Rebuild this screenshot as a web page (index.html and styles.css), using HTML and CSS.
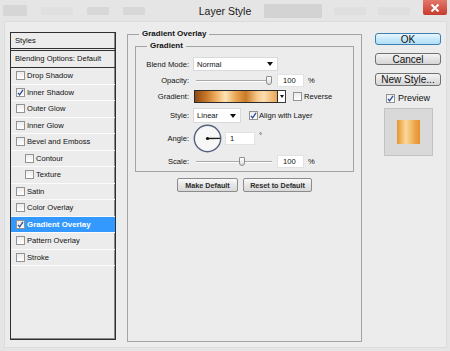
FILE: index.html
```html
<!DOCTYPE html>
<html lang="en">

<head>
    <meta charset="UTF-8">
    <meta name="viewport" content="width=device-width, initial-scale=1.0">
    <title>Layer Style</title>
    <link rel="stylesheet" href="styles.css">
</head>

<body>
    <div class="titlebar">
        <div class="tools tools-left">
            <span class="ghost g-icon"></span>
            <span class="ghost g-wide"></span>
            <span class="ghost g-small"></span>
            <span class="ghost g-small"></span>
        </div>
        <div class="title">Layer Style</div>
        <div class="tools tools-right">
            <span class="ghost g-tab"></span>
            <span class="ghost g-text"></span>
            <span class="ghost g-text"></span>
            <div class="close">
                <svg width="10" height="8" viewBox="0 0 10 8"><path d="M1.5 0.5 L8.5 7.5 M8.5 0.5 L1.5 7.5" stroke="#fff" stroke-width="2" fill="none"/></svg>
            </div>
        </div>
    </div>

    <div class="window">
        <div class="styles-panel">
            <div class="panel-head">Styles</div>
            <div class="blend-opts">Blending Options: Default</div>
            <div class="style-row"><span class="cb"></span>Drop Shadow</div>
            <div class="style-row"><span class="cb checked"><svg width="7" height="7" viewBox="0 0 7 7"><path d="M1 3.8 L2.6 5.8 L6 0.8" stroke="#2d4f9e" stroke-width="1.3" fill="none"/></svg></span>Inner Shadow</div>
            <div class="style-row"><span class="cb"></span>Outer Glow</div>
            <div class="style-row"><span class="cb"></span>Inner Glow</div>
            <div class="style-row"><span class="cb"></span>Bevel and Emboss</div>
            <div class="style-row sub"><span class="cb"></span>Contour</div>
            <div class="style-row sub"><span class="cb"></span>Texture</div>
            <div class="style-row"><span class="cb"></span>Satin</div>
            <div class="style-row"><span class="cb"></span>Color Overlay</div>
            <div class="style-row active"><span class="cb checked"><svg width="7" height="7" viewBox="0 0 7 7"><path d="M1 3.8 L2.6 5.8 L6 0.8" stroke="#2d4f9e" stroke-width="1.3" fill="none"/></svg></span>Gradient Overlay</div>
            <div class="style-row"><span class="cb"></span>Pattern Overlay</div>
            <div class="style-row"><span class="cb"></span>Stroke</div>
        </div>

        <fieldset class="group outer">
            <legend>Gradient Overlay</legend>
            <fieldset class="group inner">
                <legend>Gradient</legend>
                <div class="field f-blend">
                    <span class="lbl">Blend Mode:</span>
                    <div class="select s-blend">Normal<span class="tri"></span></div>
                </div>
                <div class="field f-opacity">
                    <span class="lbl">Opacity:</span>
                    <div class="slider"><span class="thumb" style="left:70px"></span></div>
                    <div class="num">100</div>
                    <span class="unit">%</span>
                </div>
                <div class="field f-gradient">
                    <span class="lbl">Gradient:</span>
                    <div class="swatch"></div>
                    <div class="drop"><span class="tri"></span></div>
                    <span class="cb cb-reverse"></span>
                    <span class="cb-text">Reverse</span>
                </div>
                <div class="field f-style">
                    <span class="lbl">Style:</span>
                    <div class="select s-style">Linear<span class="tri"></span></div>
                    <span class="cb checked cb-align"><svg width="7" height="7" viewBox="0 0 7 7"><path d="M1 3.8 L2.6 5.8 L6 0.8" stroke="#2d4f9e" stroke-width="1.3" fill="none"/></svg></span>
                    <span class="cb-text">Align with Layer</span>
                </div>
                <div class="field f-angle">
                    <span class="lbl">Angle:</span>
                    <svg class="dial" width="29" height="29" viewBox="0 0 29 29">
                        <circle cx="14.5" cy="14.5" r="13.2" fill="#f7f7f7" stroke="#56637f" stroke-width="1.4"/>
                        <line x1="14.5" y1="14.5" x2="27" y2="14.3" stroke="#1e1e1e" stroke-width="1.3"/>
                        <circle cx="14.5" cy="14.5" r="1.6" fill="#111"/>
                    </svg>
                    <div class="num num-angle">1</div>
                    <span class="deg">°</span>
                </div>
                <div class="field f-scale">
                    <span class="lbl">Scale:</span>
                    <div class="slider"><span class="thumb" style="left:43px"></span></div>
                    <div class="num">100</div>
                    <span class="unit">%</span>
                </div>
            </fieldset>
            <div class="defaults">
                <div class="small-btn b-make">Make Default</div>
                <div class="small-btn b-reset">Reset to Default</div>
            </div>
        </fieldset>

        <div class="side">
            <div class="btn ok">OK</div>
            <div class="btn">Cancel</div>
            <div class="btn new">New Style...</div>
            <div class="preview-check">
                <span class="cb checked"><svg width="7" height="7" viewBox="0 0 7 7"><path d="M1 3.8 L2.6 5.8 L6 0.8" stroke="#2d4f9e" stroke-width="1.3" fill="none"/></svg></span>
                <span>Preview</span>
            </div>
            <div class="preview-box">
                <div class="preview-swatch"></div>
            </div>
        </div>
    </div>
</body>

</html>
```

FILE: styles.css
```css
body {
    margin: 0;
    width: 450px;
    height: 351px;
    overflow: hidden;
    background: #e5e5e5;
    font-family: "Liberation Sans", Arial, sans-serif;
    font-size: 7.6px;
    color: #111;
}

/* title bar */

.titlebar {
    height: 21px;
    display: grid;
    grid-template-columns: 1fr auto 1fr;
    align-items: center;
}

.title {
    font-size: 10.5px;
    color: #1a1a1a;
    padding: 0 4px;
}

.tools {
    display: flex;
    align-items: center;
    height: 100%;
}

.tools-left {
    gap: 14px;
    padding-left: 3px;
}

.tools-right {
    justify-content: flex-end;
    gap: 12px;
    padding-right: 3px;
}

.ghost {
    display: block;
    height: 8px;
    background: #dadada;
    border-radius: 1px;
}

.g-icon {
    width: 24px;
    height: 11px;
    background: #d6d6d6;
}

.g-wide {
    width: 32px;
    background: #e0e0e0;
}

.g-small {
    width: 22px;
    background: #d8d8d8;
}

.g-tab {
    width: 58px;
    height: 14px;
    background: #d3d3d3;
}

.g-text {
    width: 32px;
    background: #dfdfdf;
}

.close {
    align-self: flex-start;
    width: 24px;
    height: 15px;
    margin-left: 1px;
    display: flex;
    align-items: center;
    justify-content: center;
    background: linear-gradient(#e3786b, #c63b2e);
    border-radius: 0 0 2px 2px;
}

/* dialog body */

.window {
    height: 327px;
    margin: 0 3px 0 4px;
    padding: 10px 0 0 5px;
    box-sizing: border-box;
    background: #ececec;
    border: 1px solid #dcdcdc;
    display: flex;
    align-items: flex-start;
}

.styles-panel {
    width: 106px;
    height: 308px;
    box-sizing: border-box;
    border: 1px solid #2f2f2f;
    box-shadow: inset -1px -1px 0 #8a8a8a;
    background: #ececec;
}

.panel-head {
    height: 15px;
    line-height: 15px;
    padding-left: 4px;
    border-bottom: 3px double #2f2f2f;
}

.blend-opts {
    height: 16px;
    line-height: 16px;
    padding-left: 4px;
    border-bottom: 1px solid #2f2f2f;
}

.style-row {
    height: 16.5px;
    box-sizing: border-box;
    border-bottom: 1px solid #fbfbfb;
    display: flex;
    align-items: center;
    padding-left: 5px;
}

.style-row.sub {
    padding-left: 14px;
}

.style-row.active {
    background: #3399ff;
    color: #fff;
    font-weight: bold;
    font-size: 7.9px;
}

.cb {
    width: 9px;
    height: 9px;
    box-sizing: border-box;
    border: 1px solid #939393;
    background: linear-gradient(#ececec, #ffffff);
    margin-right: 2px;
    display: inline-flex;
    align-items: center;
    justify-content: center;
    flex-shrink: 0;
}

/* group boxes */

.group {
    margin: 0;
    padding: 0;
    min-width: 0;
    border: 1px solid #a4a4a4;
}

.group legend {
    margin-left: 11px;
    padding: 0 3px;
    font-weight: bold;
    font-size: 8px;
    line-height: 10px;
}

.outer {
    width: 235px;
    height: 313px;
    box-sizing: border-box;
    margin: -3px 0 0 11px;
}

.inner {
    margin: 2px 7px 0;
    padding: 0 0 3px;
}

.field {
    display: flex;
    align-items: center;
}

.lbl {
    width: 53px;
    margin-right: 4px;
    text-align: right;
    flex-shrink: 0;
}

.f-blend {
    height: 14px;
    margin-top: 6px;
}

.f-opacity {
    height: 13px;
    margin-top: 3px;
}

.f-gradient {
    height: 13px;
    margin-top: 3px;
}

.f-style {
    height: 15px;
    margin-top: 5px;
}

.f-angle {
    height: 28px;
    margin-top: 1px;
}

.f-scale {
    height: 13px;
    margin-top: 3px;
}

.select {
    height: 100%;
    box-sizing: border-box;
    background: #fff;
    border: 1px solid #d9d9d9;
    display: flex;
    align-items: center;
    justify-content: space-between;
    padding: 0 4px 0 3px;
}

.s-blend {
    width: 85px;
}

.s-style {
    width: 48px;
}

.tri {
    width: 0;
    height: 0;
    border-left: 3px solid transparent;
    border-right: 3px solid transparent;
    border-top: 4px solid #111;
}

.slider {
    position: relative;
    width: 76px;
    height: 13px;
    margin-left: 3px;
    display: flex;
    align-items: center;
}

.slider::before {
    content: "";
    display: block;
    width: 100%;
    height: 0;
    border-top: 1px solid #a9a9a9;
    border-bottom: 1px solid #fdfdfd;
}

.thumb {
    position: absolute;
    top: 2px;
    width: 6px;
    height: 9px;
    box-sizing: border-box;
    border: 1px solid #8d8d8d;
    border-radius: 1px 1px 3px 3px;
    background: linear-gradient(#ffffff, #dcdcdc);
}

.num {
    width: 27px;
    height: 13px;
    box-sizing: border-box;
    margin-left: 5px;
    padding-left: 5px;
    background: #fff;
    border: 1px solid #e2e2e2;
    line-height: 11px;
}

.unit {
    margin-left: 4px;
}

.swatch {
    width: 84px;
    height: 13px;
    box-sizing: border-box;
    margin-left: 1px;
    border: 1px solid #2a2a2a;
    background: linear-gradient(90deg, #8c4a12 0%, #c9782a 14%, #f2b468 27%, #fde4b6 37%, #e9a552 50%, #c97a26 62%, #f6c98c 76%, #fcdcae 84%, #eaa656 100%);
}

.drop {
    width: 8px;
    height: 13px;
    box-sizing: border-box;
    border: 1px solid #3a3a3a;
    border-left: none;
    background: #fff;
    display: flex;
    align-items: center;
    justify-content: center;
}

.drop .tri {
    border-left-width: 2px;
    border-right-width: 2px;
    border-top-width: 3px;
}

.cb-reverse {
    margin-left: 7px;
}

.cb-align {
    margin-left: 8px;
    margin-right: 1px;
}

.dial {
    margin-top: 1px;
}

.num-angle {
    width: 30px;
    margin-left: 3px;
    padding-left: 4px;
}

.deg {
    align-self: flex-start;
    margin: 7px 0 0 4px;
}

.defaults {
    display: flex;
    justify-content: center;
    gap: 5px;
    margin-top: 6px;
}

.small-btn {
    height: 14px;
    box-sizing: border-box;
    border: 1px solid #8c8c8c;
    border-radius: 2px;
    background: linear-gradient(#fafafa, #e6e6e6 50%, #d9d9d9);
    display: flex;
    align-items: center;
    justify-content: center;
    font-weight: bold;
    font-size: 7.2px;
    color: #2a2a2a;
}

.b-make {
    width: 61px;
}

.b-reset {
    width: 69px;
}

/* right column */

.side {
    width: 66px;
    margin: 1px 0 0 13px;
    display: flex;
    flex-direction: column;
    align-items: center;
}

.btn {
    width: 66px;
    height: 12px;
    box-sizing: border-box;
    margin-bottom: 8px;
    border: 1px solid #707070;
    border-radius: 3px;
    background: linear-gradient(#f4f4f4, #e4e4e4 50%, #d5d5d5);
    display: flex;
    align-items: center;
    justify-content: center;
    font-size: 10px;
    color: #111;
}

.btn.ok {
    border-color: #3c7fb1;
    background: linear-gradient(#eaf6fd, #c6e9fb 50%, #b2def6);
}

.btn.new {
    height: 13px;
}

.preview-check {
    display: flex;
    align-items: center;
    height: 12px;
    margin-top: -2px;
    font-size: 9px;
}

.preview-check .cb {
    margin-right: 3px;
}

.preview-box {
    width: 49px;
    height: 48px;
    box-sizing: border-box;
    margin-top: 4px;
    border: 1px solid #c2c2c2;
    background: #d9d9d9;
    display: flex;
    align-items: center;
    justify-content: center;
}

.preview-swatch {
    width: 23px;
    height: 24px;
    background: linear-gradient(90deg, #e39632 0%, #f3bc68 22%, #fbd79c 38%, #f4c173 58%, #eba246 80%, #e3922e 100%);
}
```
